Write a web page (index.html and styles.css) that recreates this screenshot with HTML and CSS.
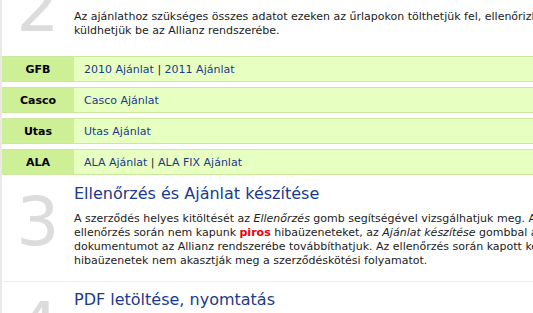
FILE: index.html
```html
<!DOCTYPE html>
<html lang="hu">
<head>
    <meta charset="UTF-8">
    <title>Ajánlatkészítés</title>
    <link rel="stylesheet" href="styles.css">
</head>
<body>
    <div class="page">
        <div class="step step-first">
            <div class="step-num">2</div>
            <div class="step-body">
                <p>Az ajánlathoz szükséges összes adatot ezeken az űrlapokon tölthetjük fel, ellenőrizhetjük, és<br>küldhetjük be az Allianz rendszerébe.</p>
            </div>
        </div>

        <table class="products">
            <tr>
                <th>GFB</th>
                <td><a href="#">2010 Ajánlat</a> | <a href="#">2011 Ajánlat</a></td>
            </tr>
            <tr>
                <th>Casco</th>
                <td><a href="#">Casco Ajánlat</a></td>
            </tr>
            <tr>
                <th>Utas</th>
                <td><a href="#">Utas Ajánlat</a></td>
            </tr>
            <tr>
                <th>ALA</th>
                <td><a href="#">ALA Ajánlat</a> | <a href="#">ALA FIX Ajánlat</a></td>
            </tr>
        </table>

        <div class="step">
            <div class="step-num">3</div>
            <div class="step-body">
                <h2>Ellenőrzés és Ajánlat készítése</h2>
                <p>A szerződés helyes kitöltését az <em>Ellenőrzés</em> gomb segítségével vizsgálhatjuk meg. Amennyiben az<br>
                ellenőrzés során nem kapunk <strong class="red">piros</strong> hibaüzeneteket, az <em>Ajánlat készítése</em> gombbal az elkészült<br>
                dokumentumot az Allianz rendszerébe továbbíthatjuk. Az ellenőrzés során kapott kék színű<br>
                hibaüzenetek nem akasztják meg a szerződéskötési folyamatot.</p>
            </div>
        </div>

        <div class="step step-sep">
            <div class="step-num">4</div>
            <div class="step-body">
                <h2>PDF letöltése, nyomtatás</h2>
            </div>
        </div>
    </div>
</body>
</html>
```

FILE: styles.css
```css
html, body {
    margin: 0;
    padding: 0;
    overflow: hidden;
    background-color: #fff;
}
body {
    font-family: Tahoma, "DejaVu Sans", sans-serif;
    font-size: 11px;
    color: #222;
}
.page {
    width: 640px;
    height: 313px;
    overflow: hidden;
    border-left: 2px solid #ebe8e5;
}
.step {
    display: flex;
}
.step-first {
    margin-top: -34px;
    height: 90px;
}
.step-sep {
    border-top: 1px solid #eeeeee;
    margin-top: 13px;
    padding-top: 4px;
}
.step-num {
    width: 72px;
    flex: none;
    font-family: "DejaVu Sans", sans-serif;
    font-size: 68px;
    line-height: 1;
    color: #dcdcdc;
    text-align: center;
    padding-top: 8px;
}
.step-body {
    flex: 1;
}
.step-first .step-body {
    padding-top: 44px;
}
.step-body p {
    margin: 0;
    line-height: 14px;
}
h2 {
    margin: 4px 0 9px;
    font-size: 16px;
    font-weight: normal;
    color: #1a3a8c;
}
.red {
    color: #e8000c;
}
.products {
    width: 100%;
    border-collapse: separate;
    border-spacing: 0 5px;
    margin-top: -5px;
}
.products th,
.products td {
    height: 24px;
    padding: 0;
    border-top: 1px solid #cbe89f;
    border-bottom: 1px solid #cbe89f;
}
.products th {
    width: 72px;
    background-color: #cdef95;
    color: #000;
    text-align: center;
}
.products td {
    background-color: #e8ffc2;
    padding-left: 10px;
}
.products a {
    color: #1a3a8c;
    text-decoration: none;
}
```
